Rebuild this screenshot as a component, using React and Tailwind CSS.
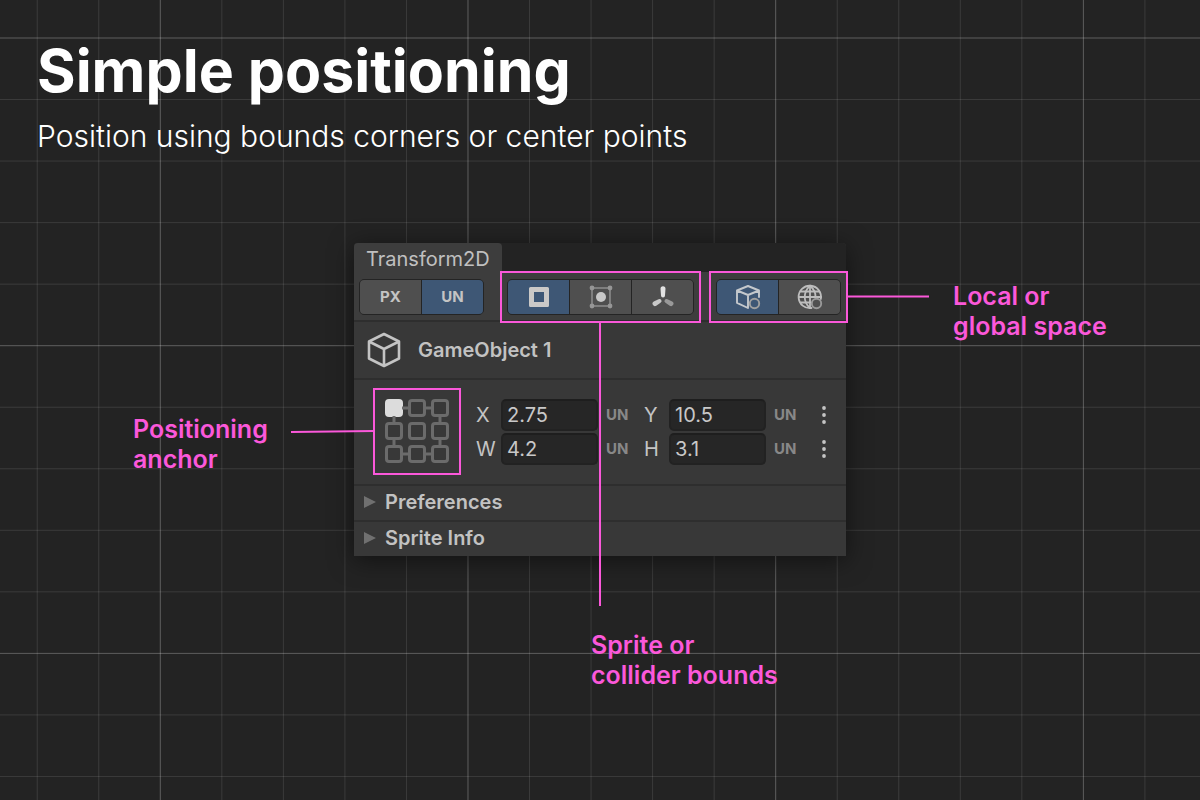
import React, { useState } from "react";

const STEP = 800 / 13;
const steps = (origin) =>
  Array.from({ length: 70 }, (_, i) => i - 5).map((k) => ({
    at: origin + k * STEP,
    major: k % 5 === 0,
  }));

function GridBackdrop() {
  return (
    <svg className="absolute inset-0 h-full w-full" aria-hidden="true">
      {steps(160.3).map(({ at, major }) => (
        <line key={"v" + at} x1={at} x2={at} y1="0" y2="100%" stroke="#fff" strokeOpacity={major ? 0.27 : 0.11} />
      ))}
      {steps(38).map(({ at, major }) => (
        <line key={"h" + at} y1={at} y2={at} x1="0" x2="100%" stroke="#fff" strokeOpacity={major ? 0.27 : 0.11} />
      ))}
    </svg>
  );
}

function Segmented({ label, items, initial, className }) {
  const [active, setActive] = useState(initial);
  return (
    <div
      role="group"
      aria-label={label}
      className={"flex h-9 shrink-0 gap-px overflow-hidden rounded-[5px] border border-[#242424] bg-[#242424] " + className}
    >
      {items.map(({ name, content }, i) => (
        <button
          key={name}
          type="button"
          aria-label={name}
          aria-pressed={i === active}
          onClick={() => setActive(i)}
          className={
            "flex flex-1 items-center justify-center text-[15px] font-bold text-[#c4c4c4] " +
            (i === active ? "bg-[#3e5775]" : "bg-[#4f4f4f]")
          }
        >
          {content}
        </button>
      ))}
    </div>
  );
}

const SpriteIcon = () => (
  <svg width="20" height="20" viewBox="0 0 20 20" aria-hidden="true">
    <path fill="#cbc9c7" fillRule="evenodd" d="M1.5 0h17A1.5 1.5 0 0 1 20 1.5v17a1.5 1.5 0 0 1-1.5 1.5h-17A1.5 1.5 0 0 1 0 18.500v-17A1.500 1.500 0 0 1 1.500 0ZM5 5v10h10V5Z" />
  </svg>
);

const ColliderIcon = () => (
  <svg width="24" height="24" viewBox="0 0 24 24" aria-hidden="true">
    <rect x="3" y="3" width="18" height="18" fill="none" stroke="#8f8f8f" strokeWidth="1.500" />
    <g fill="#969696">
      <circle cx="3" cy="3" r="2.400" />
      <circle cx="21" cy="3" r="2.400" />
      <circle cx="3" cy="21" r="2.400" />
      <circle cx="21" cy="21" r="2.400" />
    </g>
    <circle cx="12" cy="12" r="5" fill="#c8c8c8" />
  </svg>
);

const PivotIcon = () => (
  <svg width="24" height="24" viewBox="0 0 24 24" aria-hidden="true">
    <path fill="#e2e2e2" d="M9.500 3.800a2.500 2.500 0 0 1 5 0l-.5 6.700a2 2 0 0 1-4 0Z" />
    <path fill="#c8c8c8" transform="rotate(-120 12 14)" d="M9.500 4.800a2.500 2.500 0 0 1 5 0l-.5 5.200a2 2 0 0 1-4 0Z" />
    <path fill="#999" transform="rotate(120 12 14)" d="M9.500 4.800a2.500 2.500 0 0 1 5 0l-.5 5.200a2 2 0 0 1-4 0Z" />
  </svg>
);

const LocalIcon = () => (
  <svg width="26" height="26" viewBox="0 0 26 26" fill="none" strokeLinejoin="round" strokeLinecap="round" aria-hidden="true">
    <path stroke="#c4c8cc" strokeWidth="1.900" d="M24 13V6.500L13 2 2 6.500v12.300L13 24M2 6.500 13 11l11-4.500M13 11v13" />
    <circle cx="19.500" cy="19.500" r="4.700" stroke="#a0a0a0" strokeWidth="1.900" />
  </svg>
);

const GlobalIcon = () => (
  <svg width="26" height="26" viewBox="0 0 26 26" fill="none" strokeLinecap="round" aria-hidden="true">
    <g stroke="#bdbdbd" strokeWidth="1.800">
      <path d="M23.800 15A11.200 11.200 0 1 0 14.500 24" />
      <path d="M13 1.800V24M2 13h22M3.700 7.500h18.600M3.700 18.500H13.500" />
      <path d="M13 1.800C6 8 6 18 13 24M13 1.800c4 3.500 5.800 7.500 5.500 11.500" />
    </g>
    <circle cx="19.500" cy="19.500" r="4.700" stroke="#999" strokeWidth="1.900" />
  </svg>
);

const ObjectIcon = () => (
  <svg width="34" height="36" viewBox="0 0 34 36" fill="none" stroke="#c4c4c4" strokeWidth="2.600" strokeLinejoin="round" aria-hidden="true">
    <path d="M17 2 32 9.500v17L17 34 2 26.500v-17ZM2 9.500 17 17l15-7.500M17 17v17" />
  </svg>
);

const FRAME = "pointer-events-none absolute border-2 border-[#fb58da]";
const NOTE = "absolute text-[25px] leading-[30px] font-semibold whitespace-nowrap text-[#fb58da]";

function AnchorPicker() {
  const [anchor, setAnchor] = useState(0);
  return (
    <div className="relative p-[11px] pt-2.5">
      <div role="radiogroup" aria-label="Positioning anchor" className="relative grid grid-cols-3 gap-[5px]">
        <svg className="absolute inset-0" width="64" height="64" stroke="#6b6b6b" strokeWidth="3" aria-hidden="true">
          <path d="M17 9h7M40 9h7M17 55h7M40 55h7M9 17v7M9 40v7M55 17v7M55 40v7" />
        </svg>
        {Array.from({ length: 9 }, (_, i) => (
          <input
            key={i}
            type="radio"
            name="anchor"
            aria-label={"Anchor " + (i + 1)}
            checked={i === anchor}
            onChange={() => setAnchor(i)}
            className="size-[18px] appearance-none rounded-[4px] border-3 border-[#6b6b6b] checked:border-[#dcdcdc] checked:bg-[#dcdcdc]"
          />
        ))}
      </div>
      <div className={FRAME + " -inset-px"} />
    </div>
  );
}

function Field({ id, initial }) {
  const [value, setValue] = useState(initial);
  return (
    <>
      <label htmlFor={id} className="w-[25px] text-xl text-[#c4c4c4]">
        {id}
      </label>
      <input
        id={id}
        value={value}
        onChange={(e) => setValue(e.target.value)}
        className="h-8 w-[97px] rounded-[5px] border-2 border-[#222] border-t-[#1e1e1e] bg-[#262626] px-1 text-xl text-[#c8c8c8] outline-none"
      />
      <span className="w-[46px] pl-2 text-[15px] font-bold text-[#888]">UN</span>
    </>
  );
}

function FieldRow({ children, name }) {
  return (
    <div className="flex items-center">
      {children}
      <button type="button" aria-label={name} className="flex h-6 w-6 items-center justify-center">
        <svg width="4" height="18" viewBox="0 0 4 18" fill="#c4c4c4" aria-hidden="true">
          <circle cx="2" cy="2" r="1.900" />
          <circle cx="2" cy="9" r="1.900" />
          <circle cx="2" cy="16" r="1.900" />
        </svg>
      </button>
    </div>
  );
}

function Foldout({ title }) {
  return (
    <button
      type="button"
      aria-expanded="false"
      className="flex h-9 w-full items-center gap-[9px] border-t-2 border-[#2e2e2e] pb-0.5 pl-2.5 text-left text-xl font-semibold text-[#c2c2c2]"
    >
      <svg width="12" height="12" viewBox="0 0 12 12" fill="#707070" aria-hidden="true">
        <path d="M0 0 12 6 0 12Z" />
      </svg>
      {title}
    </button>
  );
}

function TransformPanel() {
  return (
    <section className="rounded-t bg-[#383838] shadow-[0_4px_24px_rgba(0,0,0,0.5)]" aria-label="Transform2D">
      <div className="flex rounded-t bg-[#232323]">
        <h2 className="h-[29px] rounded-t bg-[#3d3d3d] px-3 pt-0.5 text-xl text-[#c0c0c0]">Transform2D</h2>
      </div>
      <div className="flex bg-[#3d3d3d] px-[5px] pt-[7px] pb-[5px]">
        <Segmented
          label="Units"
          initial={1}
          className="w-[125px]"
          items={[
            { name: "PX", content: "PX" },
            { name: "UN", content: "UN" },
          ]}
        />
        <div className="relative ml-[23px]">
          <Segmented
            label="Bounds"
            initial={0}
            className="w-[187px]"
            items={[
              { name: "Sprite bounds", content: <SpriteIcon /> },
              { name: "Collider bounds", content: <ColliderIcon /> },
              { name: "Pivot", content: <PivotIcon /> },
            ]}
          />
          <div className={FRAME + " -inset-x-[7px] -inset-y-2"} />
        </div>
        <div className="relative ml-[22px]">
          <Segmented
            label="Space"
            initial={0}
            className="w-[125px]"
            items={[
              { name: "Local space", content: <LocalIcon /> },
              { name: "Global space", content: <GlobalIcon /> },
            ]}
          />
          <div className={FRAME + " -inset-x-[7px] -inset-y-2"} />
        </div>
      </div>
      <div className="flex h-[58px] items-center gap-[17px] border-t-2 border-[#2e2e2e] pl-[13px]">
        <ObjectIcon />
        <h3 className="text-xl font-semibold text-[#c2c2c2]">GameObject 1</h3>
      </div>
      <div className="flex items-start gap-4 border-t-2 border-[#2e2e2e] pt-[9px] pb-2.5 pl-5">
        <AnchorPicker />
        <div className="flex flex-col gap-0.5 pt-2.5">
          <FieldRow name="Position options">
            <Field id="X" initial="2.75" />
            <Field id="Y" initial="10.5" />
          </FieldRow>
          <FieldRow name="Size options">
            <Field id="W" initial="4.2" />
            <Field id="H" initial="3.1" />
          </FieldRow>
        </div>
      </div>
      <Foldout title="Preferences" />
      <Foldout title="Sprite Info" />
    </section>
  );
}

export default function App() {
  return (
    <main className="relative min-h-screen overflow-hidden bg-[#232323] font-['Inter',sans-serif] [font-optical-sizing:none]">
      <GridBackdrop />
      <header className="relative px-[37px] pt-9 text-white">
        <h1 className="text-[59px] leading-[70px] font-bold">Simple positioning</h1>
        <p className="mt-2.5 text-[30px] leading-10 font-light">Position using bounds corners or center points</p>
      </header>
      <div className="relative mx-auto mt-[87px] w-[492px]">
        <TransformPanel />
        <svg
          className="pointer-events-none absolute inset-0 overflow-visible"
          width="492"
          height="314"
          stroke="#fb58da"
          strokeWidth="2"
          aria-hidden="true"
        >
          <path d="M-63 189 20 188M246 80V363M493 53.500H575" />
        </svg>
        <p className={NOTE + " top-[171px] -left-[221px]"}>
          Positioning
          <br />
          anchor
        </p>
        <p className={NOTE + " top-[387px] left-[237px]"}>
          Sprite or
          <br />
          collider bounds
        </p>
        <p className={NOTE + " top-[38px] left-[599px]"}>
          Local or
          <br />
          global space
        </p>
      </div>
    </main>
  );
}
